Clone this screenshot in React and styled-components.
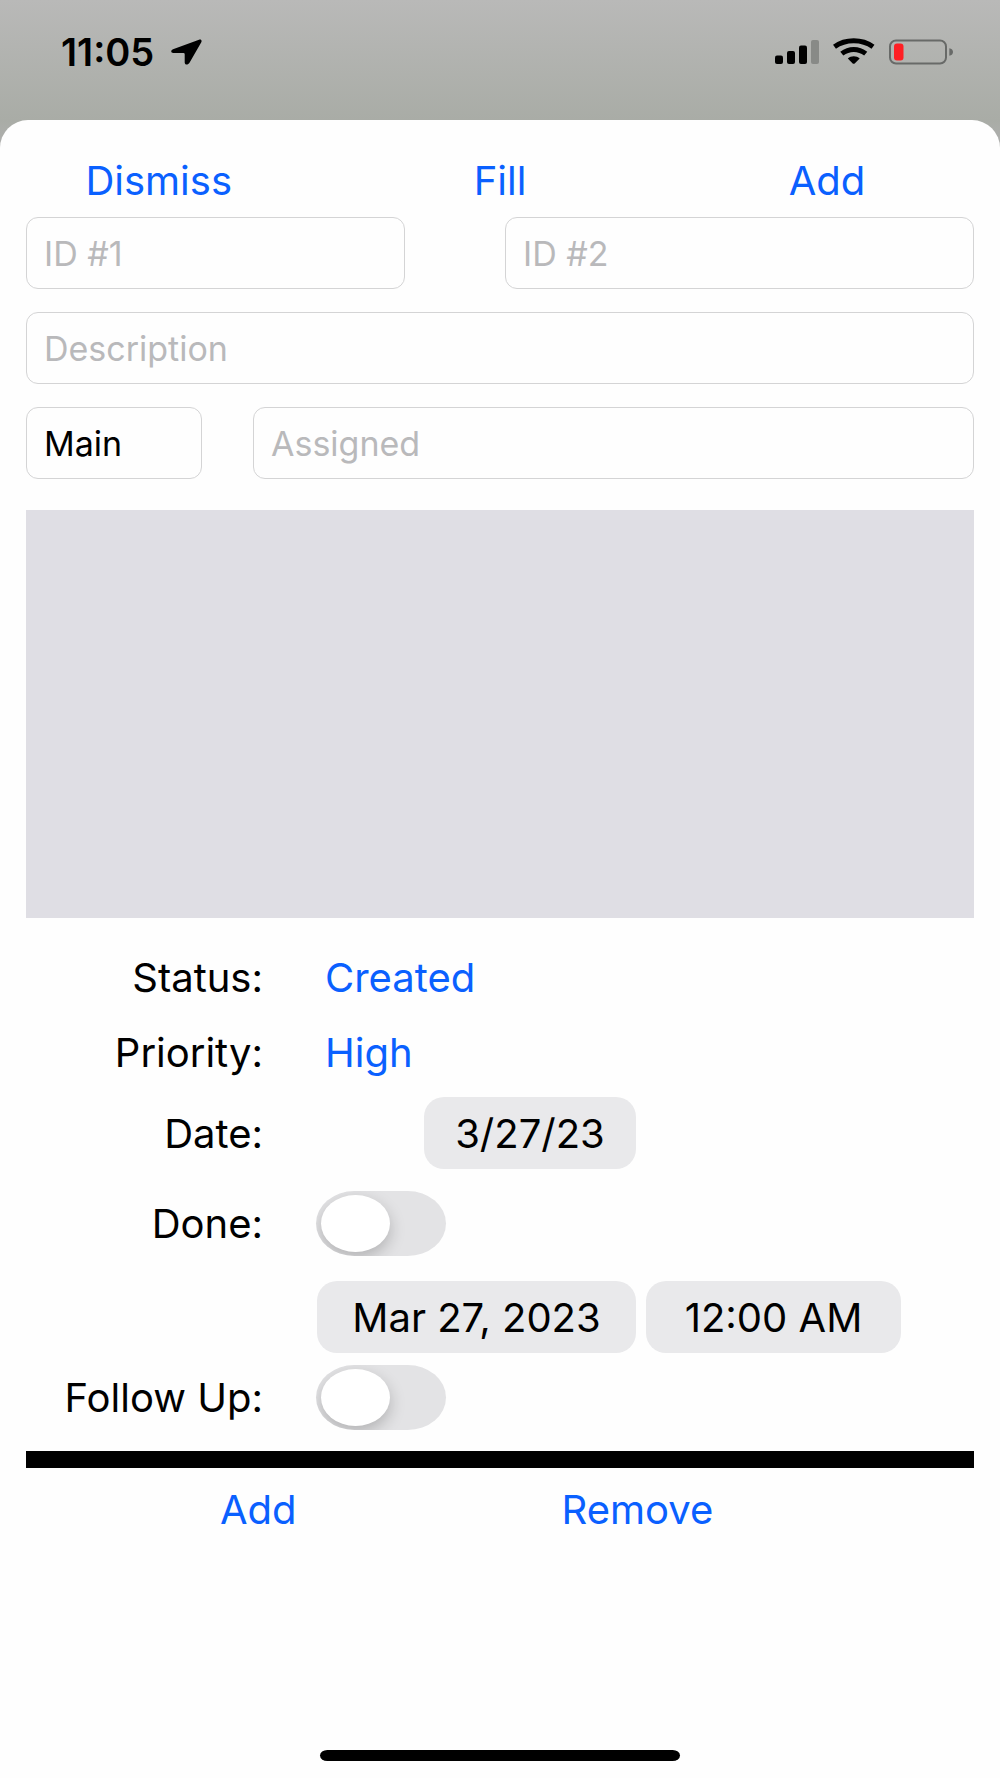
import React, { useState } from "react";
import styled, { createGlobalStyle } from "styled-components";

export default function App() {
  const [location, setLocation] = useState("Main");
  const [done, setDone] = useState(false);
  const [followUp, setFollowUp] = useState(false);

  return (
    <Screen>
      <GlobalStyle />

      {/* status bar */}
      <StatusBar>
        <Clock>
          11:05
          <LocationArrow />
        </Clock>
        <StatusIcons />
      </StatusBar>

      <Sheet>
        <TopActions>
          <TextButton type="button">Dismiss</TextButton>
          <TextButton type="button">Fill</TextButton>
          <TextButton type="button">Add</TextButton>
        </TopActions>

        {/* text fields */}
        <Fields>
          <FieldRow $columns="379fr 469fr" $gap="100px">
            <Field type="text" aria-label="ID #1" placeholder="ID #1" />
            <Field type="text" aria-label="ID #2" placeholder="ID #2" />
          </FieldRow>
          <FieldRow $columns="1fr">
            <Field
              type="text"
              aria-label="Description"
              placeholder="Description"
            />
          </FieldRow>
          <FieldRow $columns="176fr 721fr" $gap="51px">
            <Field
              type="text"
              aria-label="Location"
              value={location}
              onChange={(e) => setLocation(e.target.value)}
            />
            <Field type="text" aria-label="Assigned" placeholder="Assigned" />
          </FieldRow>
        </Fields>

        <Notes aria-label="Notes" />

        {/* details */}
        <Details>
          <Label htmlFor="status">Status:</Label>
          <Value>
            <TextButton id="status" type="button" $inset>
              Created
            </TextButton>
          </Value>

          <Label htmlFor="priority">Priority:</Label>
          <Value>
            <TextButton id="priority" type="button" $inset>
              High
            </TextButton>
          </Value>

          <Label htmlFor="date">Date:</Label>
          <Value>
            <DateSlot>
              <Pill id="date" type="button" $width="212px">
                3/27/23
              </Pill>
            </DateSlot>
          </Value>

          <Label htmlFor="done">Done:</Label>
          <Value>
            <Toggle
              id="done"
              type="checkbox"
              role="switch"
              checked={done}
              onChange={() => setDone(!done)}
            />
          </Value>

          <span />
          <Value>
            <DateSlot>
              <Pill type="button" $width="319px">
                Mar 27, 2023
              </Pill>
            </DateSlot>
            <Pill type="button" $width="255px">
              12:00 AM
            </Pill>
          </Value>

          <Label htmlFor="follow-up">Follow Up:</Label>
          <Value>
            <Toggle
              id="follow-up"
              type="checkbox"
              role="switch"
              checked={followUp}
              onChange={() => setFollowUp(!followUp)}
            />
          </Value>
        </Details>

        <Divider />

        <BottomActions>
          <TextButton type="button">Add</TextButton>
          <TextButton type="button">Remove</TextButton>
        </BottomActions>

        <HomeIndicator />
      </Sheet>
    </Screen>
  );
}

function LocationArrow() {
  return (
    <svg width="31" height="26" viewBox="0 0 31 26" aria-hidden="true">
      <path d="M28 .7 2 10.2C-.5 11.200-.3 14 2.300 14H12.500Q13.700 14 13.700 15.200V23.500C13.700 26 17 26.300 18.500 23.700L30.300 3.200C31.200 1.400 30-.1 28 .7Z" />
    </svg>
  );
}

function StatusIcons() {
  return (
    <svg width="179" height="28" viewBox="0 0 179 28" aria-hidden="true">
      {/* signal */}
      <rect x="0" y="17.500" width="8" height="8.500" rx="2" />
      <rect x="12" y="13" width="8" height="13" rx="2" />
      <rect x="24" y="7.500" width="8" height="18.500" rx="2" />
      <rect x="36" y="2" width="8" height="24" rx="2" fill="#888a87" />

      {/* wifi */}
      <g fill="none" stroke="#000" strokeWidth="5">
        <path d="M59.500 8.800C70.500 .8 87 .8 98 8.800" />
        <path d="M66.800 15.600C74 10 83.500 10 90.700 15.600" />
      </g>
      <path d="M72.800 20.400C76 17.600 81.500 17.600 84.700 20.400L79.700 25.400Q78.700 26.200 77.700 25.400Z" />

      {/* battery */}
      <rect
        x="115"
        y="2.500"
        width="56"
        height="23"
        rx="6"
        fill="none"
        stroke="#686a68"
        strokeWidth="2"
      />
      <rect x="119" y="5.500" width="9.500" height="17" rx="3" fill="#ff1f24" />
      <path d="M174.300 10.200Q178 11 178 14T174.300 17.800Z" fill="#686a68" />
    </svg>
  );
}

const GlobalStyle = createGlobalStyle`
  * {
    box-sizing: border-box;
  }
  body {
    margin: 0;
    color: #000;
    font-family: Inter, "Liberation Sans", sans-serif;
  }
  button,
  input,
  textarea {
    font-family: inherit;
  }
`;

const Screen = styled.div`
  display: flex;
  flex-direction: column;
  min-height: 100vh;
  background: linear-gradient(#b9b9b8, #a9aca6 120px, #b0b0b0 150px);
`;

const StatusBar = styled.header`
  display: flex;
  align-items: center;
  justify-content: space-between;
  height: 120px;
  padding: 0 46px 16px 61px;
`;

const Clock = styled.div`
  display: flex;
  align-items: center;
  gap: 17px;
  font-size: 38px;
  font-weight: 600;
`;

const Sheet = styled.main`
  flex: 1;
  display: flex;
  flex-direction: column;
  padding: 23px 26px 17px;
  border-radius: 28px 28px 0 0;
  background: #fefefe;
`;

const TopActions = styled.div`
  display: grid;
  grid-template-columns: 28fr 44fr 25fr 3fr;
  justify-items: center;
  height: 74px;
`;

const TextButton = styled.button`
  height: 74px;
  padding: 0 ${(props) => (props.$inset ? "9px" : "0")};
  border: none;
  background: transparent;
  color: #0a60ff;
  font-size: 40px;
  cursor: pointer;
`;

const Fields = styled.div`
  display: grid;
  gap: 23px;
`;

const FieldRow = styled.div`
  display: grid;
  grid-template-columns: ${(props) => props.$columns};
  column-gap: ${(props) => props.$gap || "0"};
`;

const Field = styled.input`
  width: 100%;
  min-width: 0;
  height: 72px;
  padding: 0 17px;
  border: 1px solid #d4d4d5;
  border-radius: 12px;
  background: transparent;
  color: #000;
  font-size: 34px;
  &::placeholder {
    color: #b9b9bb;
    opacity: 1;
  }
`;

const Notes = styled.textarea`
  display: block;
  width: 100%;
  height: 408px;
  margin: 31px 0 22px;
  padding: 16px;
  border: none;
  background: #dfdee4;
  font-size: 34px;
  resize: none;
`;

const Details = styled.div`
  display: grid;
  grid-template-columns: 25% 1fr;
  grid-template-rows: 74px 76px 86px 94px 94px 66px;
  column-gap: 53px;
  align-items: center;
`;

const Label = styled.label`
  justify-self: end;
  font-size: 40px;
  white-space: nowrap;
`;

const Value = styled.div`
  display: flex;
  align-items: center;
  gap: 10px;
`;

const DateSlot = styled.div`
  display: flex;
  justify-content: flex-end;
  width: 320px;
`;

const Pill = styled.button`
  width: ${(props) => props.$width};
  height: 72px;
  padding: 0;
  border: none;
  border-radius: 20px;
  background: #e9e9eb;
  color: #000;
  font-size: 40px;
  white-space: nowrap;
`;

const Toggle = styled.input`
  appearance: none;
  display: flex;
  align-items: center;
  width: 130px;
  height: 65px;
  margin: 0;
  padding: 0 5px;
  border-radius: 39px / 33px;
  background: ${(props) => (props.checked ? "#34c759" : "#e3e3e5")};
  overflow: hidden;
  cursor: pointer;
  &::before {
    content: "";
    width: 69px;
    height: 57px;
    margin-left: ${(props) => (props.checked ? "auto" : "0")};
    border-radius: 50%;
    background: #fff;
    box-shadow: 0 6px 16px rgba(0, 0, 0, 0.22);
  }
`;

const Divider = styled.hr`
  width: 100%;
  height: 17px;
  margin: 21px 0 4px;
  border: none;
  background: #000;
`;

const BottomActions = styled.div`
  display: grid;
  grid-template-columns: 49fr 31fr 20fr;
  justify-items: center;
`;

const HomeIndicator = styled.div`
  width: 38%;
  height: 11px;
  margin: auto auto 0;
  border-radius: 8px / 6px;
  background: #000;
`;
